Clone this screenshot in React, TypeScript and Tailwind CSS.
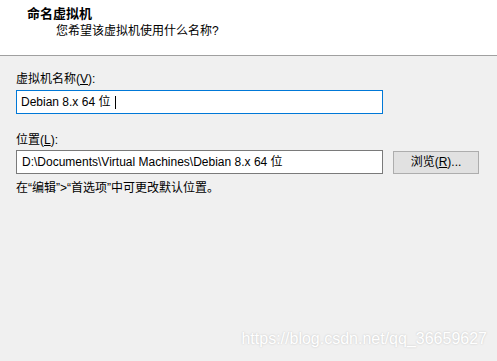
const font = { fontFamily: '"Liberation Sans", "Noto Sans CJK SC", sans-serif' };

export default function App() {
  return (
    <div className="relative w-[497px] h-[361px] bg-[#f0f0f0] text-[12px] text-black overflow-hidden" style={font}>
      {/* header */}
      <div className="h-[56px] bg-white border-b border-[#a0a0a0] pl-[27px] pt-[5px]">
        <div className="font-bold text-[13px] leading-[17px]">命名虚拟机</div>
        <div className="pl-[29px] leading-[17px] mt-[1px]">您希望该虚拟机使用什么名称?</div>
      </div>

      {/* body */}
      <div className="px-[16px] pt-[15px] flex flex-col">
        <label className="leading-[16px]">
          虚拟机名称(<span className="underline">V</span>):
        </label>
        <div className="mt-[3px] w-[367px] h-[24px] bg-white border border-[#0078d7] flex items-center pl-[4px]">
          <span className="whitespace-pre">Debian 8.x 64 位 </span>
          <span className="w-px h-[13px] bg-black ml-[1px]" />
        </div>

        <label className="mt-[18px] leading-[16px]">
          位置(<span className="underline">L</span>):
        </label>
        <div className="mt-[2px] flex items-center gap-[10px]">
          <div className="w-[367px] h-[24px] bg-white border border-[#7a7a7a] flex items-center pl-[5px]">
            D:\Documents\Virtual Machines\Debian 8.x 64 位
          </div>
          <button className="w-[86px] h-[23px] bg-[#e1e1e1] border border-[#adadad] flex items-center justify-center">
            浏览(<span className="underline">R</span>)...
          </button>
        </div>
        <div className="mt-[6px] leading-[16px]">在“编辑”&gt;“首选项”中可更改默认位置。</div>
      </div>

      {/* watermark */}
      <div
        className="absolute right-[10px] bottom-[10px] text-[16px] text-white"
        style={{ fontFamily: '"Liberation Sans", Arial, sans-serif', textShadow: '0 0 2px #c0c0c0' }}
      >
        https://blog.csdn.net/qq_36659627
      </div>
    </div>
  );
}
